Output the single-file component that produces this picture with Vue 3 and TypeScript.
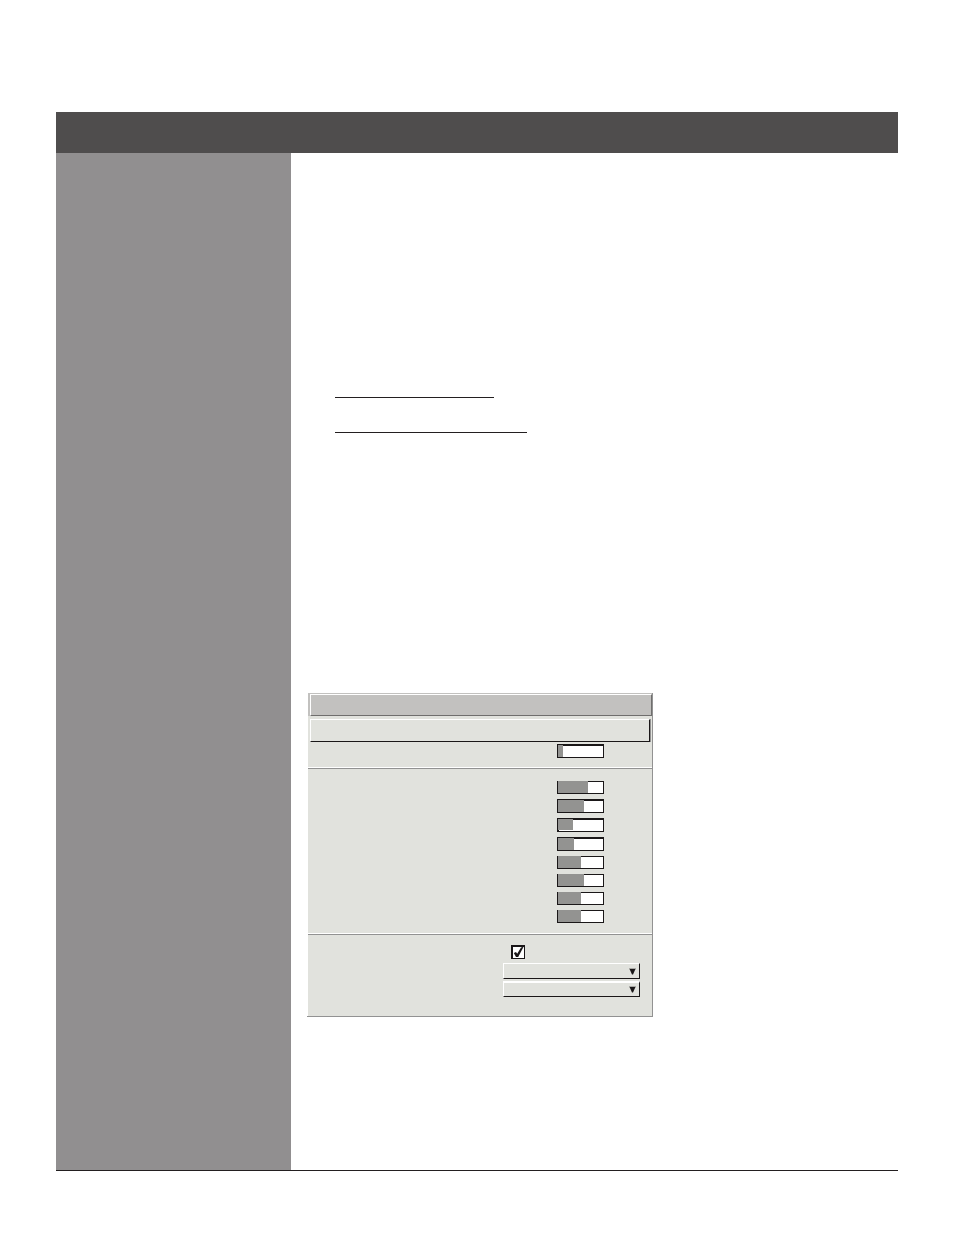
<script setup lang="ts">
import { ref } from 'vue'

interface Level {
  name: string
  fill: number
  kind: 'thick' | 'thin' | 'raised'
}

const strength = ref<Level>({ name: 'Level 1', fill: 5, kind: 'thick' })

const levels = ref<Level[]>([
  { name: 'Level 2', fill: 30, kind: 'thin' },
  { name: 'Level 3', fill: 26, kind: 'thick' },
  { name: 'Level 4', fill: 15, kind: 'raised' },
  { name: 'Level 5', fill: 16, kind: 'thick' },
  { name: 'Level 6', fill: 23, kind: 'thin' },
  { name: 'Level 7', fill: 26, kind: 'thin' },
  { name: 'Level 8', fill: 23, kind: 'thin' },
  { name: 'Level 9', fill: 23, kind: 'thin' },
])

const enabled = ref(true)
const menus = ['First menu', 'Second menu']
</script>

<template>
  <div class="page">
    <header class="banner"></header>
    <div class="body">
      <aside class="sidebar"></aside>
      <main class="content">
        <nav class="links">
          <a class="link short" href="#first" aria-label="First topic"></a>
          <a class="link long" href="#second" aria-label="Second topic"></a>
        </nav>

        <form class="panel" @submit.prevent>
          <div class="title"><div class="title-face"></div></div>
          <button class="bar" type="button" aria-label="Panel section"></button>
          <div class="first-level">
            <input
              v-model.number="strength.fill"
              type="range"
              min="0"
              max="45"
              :class="['level', strength.kind]"
              :style="{ '--fill': strength.fill + 'px' }"
              :aria-label="strength.name"
            />
          </div>
          <div class="levels">
            <input
              v-for="level in levels"
              :key="level.name"
              v-model.number="level.fill"
              type="range"
              min="0"
              max="45"
              :class="['level', level.kind]"
              :style="{ '--fill': level.fill + 'px' }"
              :aria-label="level.name"
            />
          </div>
          <div class="options">
            <label class="check">
              <input v-model="enabled" type="checkbox" aria-label="Enabled" />
              <svg v-if="enabled" viewBox="0 0 14 14" aria-hidden="true">
                <path d="M2.8 8 5 7 6.2 8.8 10 2.6 12.6 1.8 7.2 12H5Z" />
              </svg>
            </label>
            <label v-for="menu in menus" :key="menu" class="menu">
              <select :aria-label="menu">
                <option value=""></option>
              </select>
              <svg viewBox="0 0 7 7" aria-hidden="true">
                <path class="arrow-edge" d="M0 0H7V1H0Z" />
                <path d="M.5 1H6.5L4 6.5H3Z" />
              </svg>
            </label>
          </div>
        </form>
      </main>
    </div>
  </div>
</template>

<style>
body {
  margin: 0;
  background: #fff;
}
</style>

<style scoped>
.page {
  box-sizing: border-box;
  min-height: 100vh;
  padding: 112px 56px 64px;
  display: flex;
  flex-direction: column;
  font-family: "Liberation Sans", Arial, sans-serif;
}

.banner {
  height: 41px;
  background: #4f4d4d;
}

.body {
  flex: 1;
  display: flex;
  border-bottom: 1px solid #231f20;
}

.sidebar {
  flex: 0 0 235px;
  background: #918f90;
}

.content {
  flex: 1;
  min-width: 0;
  padding: 210px 16px 153px;
}

.links {
  display: flex;
  flex-direction: column;
  padding-left: 28px;
}

.link {
  height: 34px;
  border-bottom: 1px solid #231f20;
}

.short {
  width: 159px;
}

.long {
  width: 192px;
}

.panel {
  box-sizing: border-box;
  width: 100%;
  max-width: 346px;
  margin-top: 260px;
  padding-left: 1px;
  border-right: 1px solid #929292;
  border-bottom: 1px solid #929292;
  background: linear-gradient(#e1e2dd, #e1e2dd) 1px 0 no-repeat;
}

.title {
  padding: 1px 0 0 2px;
  background: #c2c1bf;
}

.title-face {
  height: 20px;
  border: 1px solid #fff;
  border-right-color: #6f6e6d;
  border-bottom-color: #6f6e6d;
}

.bar {
  box-sizing: border-box;
  display: block;
  width: calc(100% - 4px);
  height: 23px;
  margin: 3px 2px 0;
  padding: 0;
  border: 1px solid #fff;
  border-right-color: #1a1718;
  border-bottom-color: #1a1718;
  background: #e1e2dd;
  box-shadow: 1px 0 #929292;
}

.first-level,
.levels {
  display: flex;
  flex-direction: column;
  align-items: flex-end;
  gap: 5px;
  padding-right: 48px;
  border-bottom: 1px solid #929292;
  box-shadow: inset 0 -1px #fff;
}

.first-level {
  padding-top: 2px;
  padding-bottom: 10px;
}

.levels {
  padding-top: 12px;
  padding-bottom: 11px;
}

.level {
  appearance: none;
  width: 47px;
  margin: 0;
  border-radius: 0;
}

.thick {
  height: 14px;
  background:
    linear-gradient(#939391, #939391) 1px 1px / var(--fill) 12px no-repeat,
    linear-gradient(#fff, #fff) 1px 2px / 45px 11px no-repeat,
    #1a1718;
}

.raised {
  height: 14px;
  background:
    linear-gradient(#939391, #939391) 1px 1px / var(--fill) 11px no-repeat,
    linear-gradient(#fff, #fff) 2px 2px / 44px 11px no-repeat,
    #1a1718;
}

.thin {
  height: 13px;
  background:
    linear-gradient(#939391, #939391) 1px 0 / var(--fill) 12px no-repeat,
    linear-gradient(#fff, #fff) 1px 1px / 45px 11px no-repeat,
    #1a1718;
}

.level::-webkit-slider-thumb {
  appearance: none;
  width: 0;
  height: 0;
}

.options {
  display: flex;
  flex-direction: column;
  align-items: flex-end;
  gap: 2px;
  padding: 10px 12px 19px 0;
}

.check {
  position: relative;
  width: 14px;
  height: 14px;
  margin: 0 115px 2px 0;
}

.check input {
  appearance: none;
  box-sizing: border-box;
  display: block;
  width: 14px;
  height: 14px;
  margin: 0;
  border: solid #1a1718;
  border-width: 2px 1px 1px 2px;
  background: #fff;
}

.check svg {
  position: absolute;
  inset: 0;
  fill: #1a1718;
  pointer-events: none;
}

.menu {
  position: relative;
  width: 137px;
  height: 16px;
}

.menu select {
  appearance: none;
  box-sizing: border-box;
  display: block;
  width: 100%;
  height: 16px;
  padding: 0 16px 0 4px;
  border: 1px solid #fff;
  border-right-color: #1a1718;
  border-bottom-color: #1a1718;
  border-radius: 0;
  background: #e1e2dd;
  font-size: 10px;
}

.menu:last-child select {
  border-top-width: 2px;
}

.menu svg {
  position: absolute;
  top: 5px;
  right: 4px;
  width: 7px;
  height: 7px;
  fill: #1a1718;
  pointer-events: none;
}

.menu .arrow-edge {
  fill: #a9a9a5;
}
</style>
